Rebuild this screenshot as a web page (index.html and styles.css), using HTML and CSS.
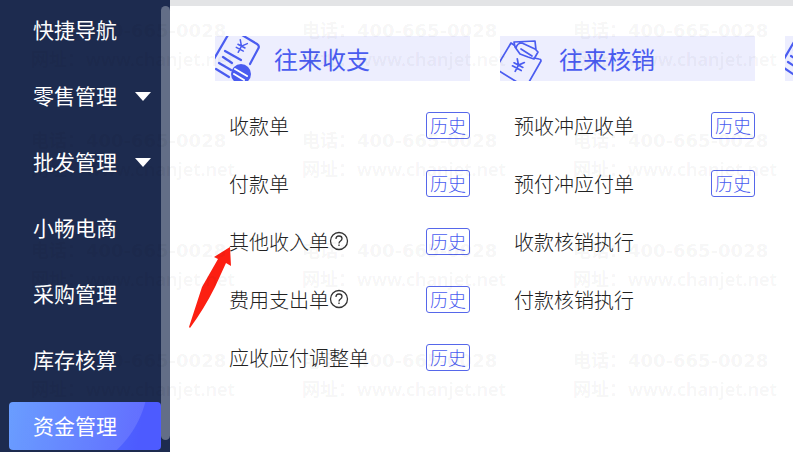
FILE: index.html
```html
<!DOCTYPE html>
<html lang="zh-CN">
<head>
  <meta charset="UTF-8">
  <title>资金管理</title>
  <meta name="viewport" content="width=device-width, initial-scale=1.0">
  <link rel="stylesheet" href="styles.css">
</head>
<body>
<div class="app">
  <nav class="sidebar">
    <a class="nav-item" href="#">快捷导航</a>
    <a class="nav-item" href="#">零售管理<span class="caret"></span></a>
    <a class="nav-item" href="#">批发管理<span class="caret"></span></a>
    <a class="nav-item" href="#">小畅电商</a>
    <a class="nav-item" href="#">采购管理</a>
    <a class="nav-item" href="#">库存核算</a>
    <a class="nav-item active" href="#">资金管理</a>
    <div class="scroll-thumb"></div>
  </nav>
  <main class="content">
    <section class="group">
      <h2 class="group-title">
        <svg class="group-icon" width="45" height="45" viewBox="0 0 45 45" fill="none" stroke="#4a5cf0" stroke-width="2.2" stroke-linecap="round" stroke-linejoin="round">
          <path d="M13 -1L-1 23M27 -1L42 8Q45 10 43 13L35 28"/>
          <path d="M10 15L26 24M8 21L17 27M4 27L16 34M1 33L14 41"/>
          <path transform="translate(26 11) rotate(28)" stroke-width="1.5" d="M-4 -6L0 -1L4 -6M0 -1V6M-4 -1H4M-4 2.500H4"/>
          <circle cx="26" cy="38" r="10" fill="#4a5cf0" stroke="none"/>
          <path d="M20 33L32 40M19 38L29 44" stroke="#fff" stroke-width="2"/>
        </svg>
        往来收支
      </h2>
      <ul class="rows">
        <li class="row"><a href="#">收款单</a><button type="button" class="history">历史</button></li>
        <li class="row"><a href="#">付款单</a><button type="button" class="history">历史</button></li>
        <li class="row">
          <a href="#">其他收入单</a>
          <svg class="help" width="20" height="20" viewBox="0 0 20 20" fill="none" stroke="#333" stroke-width="1.3"><circle cx="10" cy="10" r="8.5"/><path d="M7 8Q7 5 10 5Q13 5 13 7.500Q13 9 11.500 10Q10 11 10 12.500M10 13.500V15"/></svg>
          <button type="button" class="history">历史</button>
        </li>
        <li class="row">
          <a href="#">费用支出单</a>
          <svg class="help" width="20" height="20" viewBox="0 0 20 20" fill="none" stroke="#333" stroke-width="1.3"><circle cx="10" cy="10" r="8.5"/><path d="M7 8Q7 5 10 5Q13 5 13 7.500Q13 9 11.500 10Q10 11 10 12.500M10 13.500V15"/></svg>
          <button type="button" class="history">历史</button>
        </li>
        <li class="row"><a href="#">应收应付调整单</a><button type="button" class="history">历史</button></li>
      </ul>
    </section>
    <section class="group">
      <h2 class="group-title">
        <svg class="group-icon" width="45" height="45" viewBox="0 0 45 45" fill="none" stroke="#4a5cf0" stroke-width="1.7" stroke-linecap="round" stroke-linejoin="round">
          <path d="M14 9L11 7L-1 27M-1 35L17 46M29 46L41 25Q41 23 39 23L34 22"/>
          <path d="M14 6L35 5L36 14M14 6L15 11L20 18L28 21L34 23L38 16L35 13L22 7Q17 7 16 12"/>
          <path d="M21 13L32 20"/>
          <path transform="translate(18 30) rotate(28)" d="M-4 -6L0 -1L4 -6M0 -1V6M-5 -1H5M-5 2.500H5"/>
        </svg>
        往来核销
      </h2>
      <ul class="rows">
        <li class="row"><a href="#">预收冲应收单</a><button type="button" class="history">历史</button></li>
        <li class="row"><a href="#">预付冲应付单</a><button type="button" class="history">历史</button></li>
        <li class="row"><a href="#">收款核销执行</a></li>
        <li class="row"><a href="#">付款核销执行</a></li>
      </ul>
    </section>
    <section class="group">
      <h2 class="group-title">
        <svg class="group-icon" width="45" height="45" viewBox="0 0 45 45" fill="none" stroke="#4a5cf0" stroke-width="2.2" stroke-linecap="round">
          <path d="M13 -1L-1 23M-1 32L14 42M9 14L20 21M6 20L17 27M3 26L14 33"/>
        </svg>
      </h2>
    </section>
  </main>
  <svg class="arrow" width="46" height="86" viewBox="0 0 46 86"><path d="M1 84L14 44L30 16L26 14L42 4L43 23L38 20L27 44Q16 66 2 85Z" fill="#fc1f12"/></svg>
  <div class="watermark" aria-hidden="true">
    <div class="mark"><span>电话：</span><span class="tel">400-665-0028</span><span>网址：</span><span>www.chanjet.net</span></div>
    <div class="mark"><span>电话：</span><span class="tel">400-665-0028</span><span>网址：</span><span>www.chanjet.net</span></div>
    <div class="mark"><span>电话：</span><span class="tel">400-665-0028</span><span>网址：</span><span>www.chanjet.net</span></div>
    <div class="mark"><span>电话：</span><span class="tel">400-665-0028</span><span>网址：</span><span>www.chanjet.net</span></div>
    <div class="mark"><span>电话：</span><span class="tel">400-665-0028</span><span>网址：</span><span>www.chanjet.net</span></div>
    <div class="mark"><span>电话：</span><span class="tel">400-665-0028</span><span>网址：</span><span>www.chanjet.net</span></div>
    <div class="mark"><span>电话：</span><span class="tel">400-665-0028</span><span>网址：</span><span>www.chanjet.net</span></div>
    <div class="mark"><span>电话：</span><span class="tel">400-665-0028</span><span>网址：</span><span>www.chanjet.net</span></div>
    <div class="mark"><span>电话：</span><span class="tel">400-665-0028</span><span>网址：</span><span>www.chanjet.net</span></div>
    <div class="mark"><span>电话：</span><span class="tel">400-665-0028</span><span>网址：</span><span>www.chanjet.net</span></div>
    <div class="mark"><span>电话：</span><span class="tel">400-665-0028</span><span>网址：</span><span>www.chanjet.net</span></div>
    <div class="mark"><span>电话：</span><span class="tel">400-665-0028</span><span>网址：</span><span>www.chanjet.net</span></div>
  </div>
</div>
</body>
</html>
```

FILE: styles.css
```css
* { box-sizing: border-box; }
body {
  margin: 0;
  font-family: "Noto Sans", "Noto Sans CJK SC", sans-serif;
  background: #fff;
  overflow: hidden;
}
a {
  color: inherit;
  text-decoration: none;
}
.app {
  position: relative;
  display: flex;
  min-height: 100vh;
  overflow: hidden;
}
.sidebar {
  position: relative;
  flex: 0 0 170px;
  display: flex;
  flex-direction: column;
  gap: 18px;
  padding: 6px 9px 0;
  background: #1d2b4f;
}
.nav-item {
  display: flex;
  align-items: center;
  height: 48px;
  padding: 0 0 2px 24px;
  border-radius: 4px;
  color: #fff;
  font-family: "Noto Sans CJK SC", sans-serif;
  font-size: 21px;
  font-weight: 400;
}
.nav-item.active {
  background:
    radial-gradient(circle at 40px -25px, rgba(255,255,255,0.12) 99px, transparent 100px),
    linear-gradient(100deg, #5590ff, #4d5bff 85%);
}
.caret {
  margin: 2px 0 0 18px;
  border: 8px solid transparent;
  border-top: 9px solid #fff;
  border-bottom: 0;
}
.scroll-thumb {
  position: absolute;
  top: 6px;
  right: 0;
  bottom: 12px;
  width: 9px;
  border-radius: 5px;
  background: #636e87;
}
.content {
  flex: 1;
  min-width: 0;
  display: flex;
  gap: 30px;
  padding: 30px 0 0 45px;
  border-top: 6px solid #e3e4e6;
  overflow: hidden;
}
.group {
  flex: 0 0 255px;
}
.group-title {
  display: flex;
  align-items: center;
  gap: 14px;
  height: 45px;
  margin: 0;
  background: #edeefe;
  color: #4a5cf0;
  font-family: "Noto Sans CJK SC", sans-serif;
  font-size: 24px;
  font-weight: 400;
}
.group-icon {
  overflow: hidden;
}
.rows {
  margin: 0;
  padding: 15px 0 0 14px;
  list-style: none;
}
.row {
  display: flex;
  align-items: center;
  height: 58px;
  color: #222;
  font-family: "Noto Sans CJK SC", sans-serif;
  font-size: 20px;
  font-weight: 300;
}
.history {
  width: 44px;
  height: 27px;
  margin-left: auto;
  padding: 0;
  border: 1px solid #5667ea;
  border-radius: 3px;
  background: transparent;
  color: #4a5cf0;
  font-family: "Noto Sans CJK SC", sans-serif;
  font-size: 18px;
  font-weight: 300;
  line-height: 24px;
}
.arrow {
  position: absolute;
  left: 188px;
  top: 243px;
}
/* repeated contact text laid over the whole window */
.watermark {
  position: absolute;
  top: 16px;
  left: 31px;
  display: grid;
  grid-template-columns: repeat(3, 271px);
  grid-auto-rows: 110px;
  color: rgba(0,0,0,0.05);
  font-size: 18px;
  font-weight: 600;
  pointer-events: none;
}
.mark {
  display: grid;
  grid-template-columns: 55px auto;
  grid-auto-rows: 29px;
  line-height: 29px;
  white-space: nowrap;
}
.tel {
  font-family: "DejaVu Sans", sans-serif;
}
```
